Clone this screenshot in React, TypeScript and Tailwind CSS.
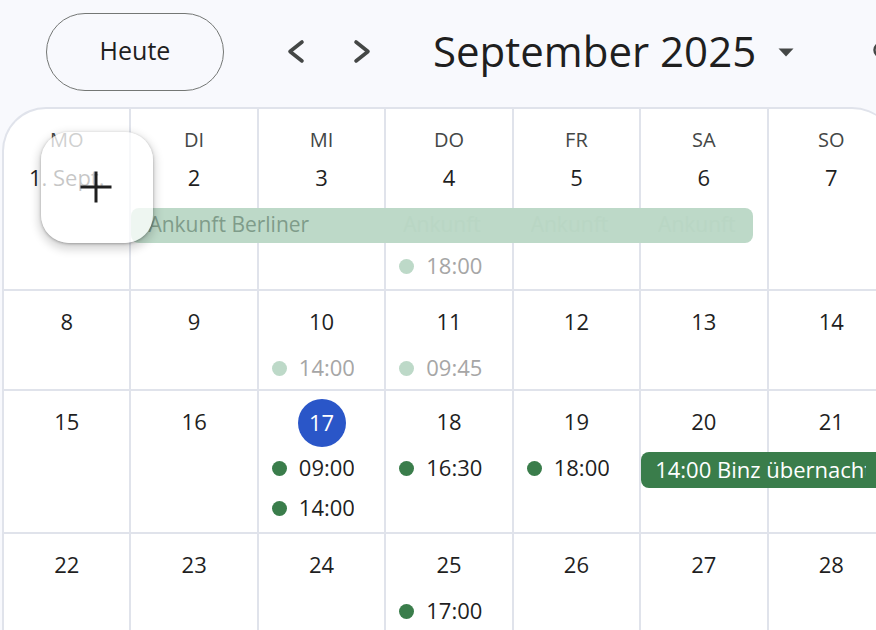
import React from "react";

type Ev = { time: string; past?: boolean };

const line = "border-[#e0e3eb]";

function Event({ time, past }: Ev) {
  return (
    <div className="flex h-[40px] items-center pb-[2px] pl-[13px] pr-[30px]">
      <span
        className={`mt-[2px] h-[15px] w-[15px] shrink-0 rounded-full ${past ? "bg-[#bdd9c8]" : "bg-[#3a7d4b]"}`}
      />
      <span
        className={`ml-[12px] min-w-0 overflow-hidden whitespace-nowrap text-[22px] ${past ? "text-[#a6a6a6]" : "text-[#1f1f1f]"}`}
      >
        {time}
      </span>
    </div>
  );
}

function DayNum({ label, today }: { label: string; today?: boolean }) {
  return (
    <div className="flex h-[48px] items-center justify-center">
      {today ? (
        <span className="flex h-[48px] w-[48px] items-center justify-center rounded-full bg-[#2a56c8] pb-[2px] text-[22px] font-medium text-white">
          {label}
        </span>
      ) : (
        <span className="mb-[3px] whitespace-nowrap text-[22px] text-[#1f1f1f]">{label}</span>
      )}
    </div>
  );
}

const firstWeek: { dow: string; day: string; events: Ev[] }[] = [
  { dow: "MO", day: "1. Sept.", events: [] },
  { dow: "DI", day: "2", events: [] },
  { dow: "MI", day: "3", events: [] },
  { dow: "DO", day: "4", events: [{ time: "18:00", past: true }] },
  { dow: "FR", day: "5", events: [] },
  { dow: "SA", day: "6", events: [] },
  { dow: "SO", day: "7", events: [] },
];

const weeks: { h: string; days: { day: string; today?: boolean; events: Ev[] }[] }[] = [
  {
    h: "h-[100px]",
    days: [
      { day: "8", events: [] },
      { day: "9", events: [] },
      { day: "10", events: [{ time: "14:00", past: true }] },
      { day: "11", events: [{ time: "09:45", past: true }] },
      { day: "12", events: [] },
      { day: "13", events: [] },
      { day: "14", events: [] },
    ],
  },
  {
    h: "h-[143px]",
    days: [
      { day: "15", events: [] },
      { day: "16", events: [] },
      { day: "17", today: true, events: [{ time: "09:00" }, { time: "14:00" }] },
      { day: "18", events: [{ time: "16:30" }] },
      { day: "19", events: [{ time: "18:00" }] },
      { day: "20", events: [] },
      { day: "21", events: [] },
    ],
  },
  {
    h: "h-[120px]",
    days: [
      { day: "22", events: [] },
      { day: "23", events: [] },
      { day: "24", events: [] },
      { day: "25", events: [{ time: "17:00" }] },
      { day: "26", events: [] },
      { day: "27", events: [] },
      { day: "28", events: [] },
    ],
  },
];

export default function App() {
  return (
    <div
      className="relative h-[630px] w-[876px] overflow-hidden bg-[#f8f9fd] text-[#1f1f1f]"
      style={{ fontFamily: "'Open Sans', Roboto, sans-serif" }}
    >
      {/* Top bar */}
      <header className="flex h-[107px] items-start pl-[46px] pt-[13px]">
        <div className="flex h-[78px] shrink-0 items-center">
          <button className="flex h-[78px] w-[178px] items-center justify-center rounded-full border-[1.5px] border-[#747775] pb-[2px] text-[25px] text-[#1f1f1f]">
            Heute
          </button>
          <button className="ml-[49px] flex h-[48px] w-[48px] items-center justify-center">
            <svg width="48" height="48" viewBox="0 0 48 48">
              <polyline points="29,14 17,23.5 29,33" fill="none" stroke="#444746" strokeWidth="3.6" strokeLinecap="round" strokeLinejoin="round" />
            </svg>
          </button>
          <button className="ml-[16px] flex h-[48px] w-[48px] items-center justify-center">
            <svg width="48" height="48" viewBox="0 0 48 48">
              <polyline points="19,14 31,23.5 19,33" fill="none" stroke="#444746" strokeWidth="3.6" strokeLinecap="round" strokeLinejoin="round" />
            </svg>
          </button>
          <div className="ml-[48px] flex w-[438px] shrink-0 items-center">
            <h1 className="whitespace-nowrap pb-[3px] text-[42px] leading-none text-[#1f1f1f]">September 2025</h1>
            <svg className="ml-[22px] shrink-0" width="16" height="9" viewBox="0 0 16 9">
              <polygon points="0.5,0.5 15.5,0.5 8,8.5" fill="#444746" />
            </svg>
          </div>
          <svg className="shrink-0" width="24" height="24" viewBox="0 0 24 24">
            <circle cx="10" cy="10" r="6.5" fill="none" stroke="#444746" strokeWidth="2.5" />
          </svg>
        </div>
      </header>

      {/* Month grid */}
      <div className={`relative ml-[2px] w-[894px] overflow-hidden rounded-t-[44px] border-l-2 border-t-2 ${line} bg-white`}>
        {/* first week with weekday labels */}
        <div className="relative grid h-[182px] grid-cols-7">
          {firstWeek.map((d) => (
            <div key={d.dow} className={`flex min-w-0 flex-col border-b-2 border-r-2 ${line} pt-[18px]`}>
              <div className="flex h-[28px] items-center justify-center pb-[2px] text-[20px] text-[#444746]">{d.dow}</div>
              <DayNum label={d.day} />
              <div className="h-[43px] shrink-0" />
              {d.events.map((e, i) => (
                <Event key={i} {...e} />
              ))}
            </div>
          ))}
          {/* multi-day bar */}
          <div className="absolute left-[calc(100%/7)] right-[calc(100%/7_+_16px)] top-[99px] flex h-[35px] items-center overflow-hidden rounded-[8px] bg-[#bdd9c8] pb-[2px] text-[21px]">
            <div className="w-[calc(892px/7)] shrink-0 whitespace-nowrap pl-[17px] text-[#7f9c8a]">
              Ankunft Berliner
            </div>
            <div className="w-[calc(892px/7)] shrink-0" />
            {[0, 1, 2].map((i) => (
              <div key={i} className="w-[calc(892px/7)] shrink-0 pl-[17px]">
                <div className="w-[80px] overflow-hidden whitespace-nowrap text-[#b9d6c4]">Ankunft</div>
              </div>
            ))}
          </div>
        </div>

        {weeks.map((w, wi) => (
          <div key={wi} className={`relative grid grid-cols-7 ${w.h}`}>
            {w.days.map((d) => (
              <div key={d.day} className={`flex min-w-0 flex-col border-b-2 border-r-2 ${line} pt-2`}>
                <DayNum label={d.day} today={d.today} />
                <div className="mt-[1px]">
                  {d.events.map((e, i) => (
                    <Event key={i} {...e} />
                  ))}
                </div>
              </div>
            ))}
            {wi === 1 && (
              <div className="absolute left-[calc(500%/7)] right-0 top-[61px] flex h-[36px] items-center rounded-l-[8px] bg-[#3a7d4b] pb-[2px] pl-[14px] pr-[30px] text-[22px] text-white">
                <span className="min-w-0 overflow-hidden whitespace-nowrap">14:00 Binz übernachtung</span>
              </div>
            )}
          </div>
        ))}
      </div>

      {/* Create button */}
      <button className="absolute left-[41px] top-[132px] flex h-[111px] w-[112px] items-center justify-center rounded-[28px] bg-white/75 shadow-[0_1px_3px_rgba(0,0,0,0.3),0_4px_8px_3px_rgba(0,0,0,0.15)]">
        <svg width="32" height="32" viewBox="0 0 32 32" className="-mt-[2px] -ml-[2px]">
          <path d="M16 0.5V31.5M0.5 16H31.5" stroke="#1f1f1f" strokeWidth="3" />
        </svg>
      </button>
    </div>
  );
}
